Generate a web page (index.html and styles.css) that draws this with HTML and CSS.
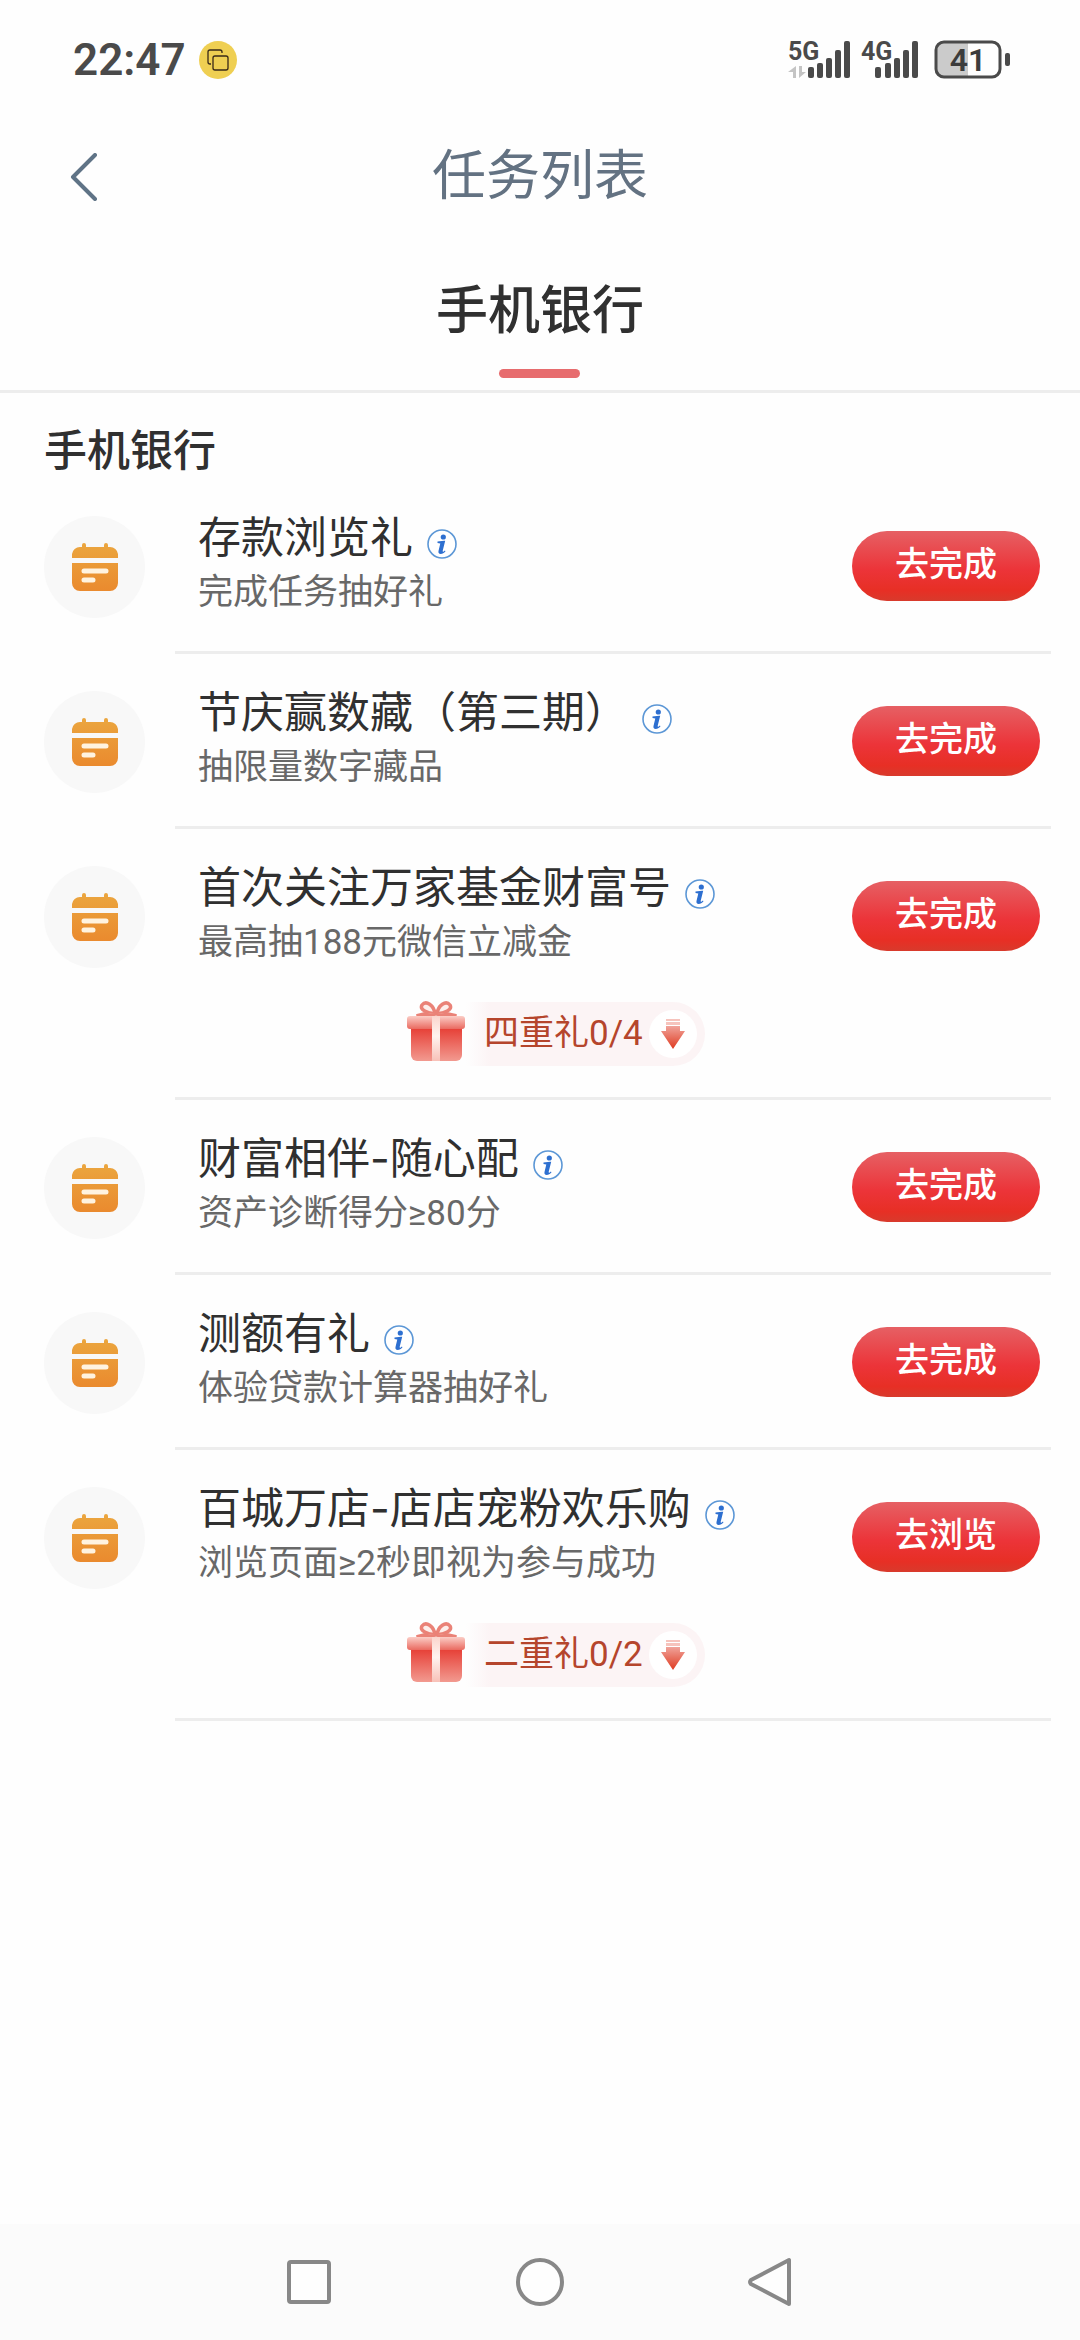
FILE: index.html
```html
<!DOCTYPE html>
<html lang="zh-CN">
<head>
<meta charset="utf-8">
<meta name="viewport" content="width=device-width, initial-scale=1">
<title>任务列表</title>
<link rel="stylesheet" href="styles.css">
</head>
<body>
<svg class="defs" aria-hidden="true">
  <defs>
    <linearGradient id="orange" x1="0" y1="0" x2="0" y2="1"><stop offset="0" stop-color="#eba63f"/><stop offset="1" stop-color="#ea8a2e"/></linearGradient>
    <linearGradient id="box" x1="0" y1="0" x2="0" y2="1"><stop offset="0" stop-color="#e63c33"/><stop offset="1" stop-color="#f29a90"/></linearGradient>
    <linearGradient id="lid" x1="0" y1="0" x2="0" y2="1"><stop offset="0" stop-color="#fbcdc6"/><stop offset="1" stop-color="#ea6a60"/></linearGradient>
    <linearGradient id="ribbon" x1="0" y1="0" x2="0" y2="1"><stop offset="0" stop-color="#fbd5cd"/><stop offset="0.45" stop-color="#fff3ef"/><stop offset="1" stop-color="#f8c1b8"/></linearGradient>
    <linearGradient id="down" x1="0" y1="0" x2="0" y2="1"><stop offset="0" stop-color="#f0a39a"/><stop offset="1" stop-color="#df3a20"/></linearGradient>
    <symbol id="task" viewBox="0 0 46 48">
      <path fill="url(#orange)" d="M8 4h2V2a2 2 0 0 1 4 0v2h18V2a2 2 0 0 1 4 0v2h2a8 8 0 0 1 8 7v4H0v-4a8 8 0 0 1 8-7zM0 20h46v20a8 8 0 0 1-8 8H8a8 8 0 0 1-8-8z"/>
      <path fill="none" stroke="#fff3e0" stroke-width="5" stroke-linecap="round" d="M12 28h22M12 37h9"/>
    </symbol>
    <symbol id="info" viewBox="0 0 30 30">
      <circle cx="15" cy="15" r="14" fill="#fff" stroke="#5c97d6" stroke-width="1.600"/>
      <circle cx="16.300" cy="8" r="2.600" fill="#2d6fd0"/>
      <path fill="#2d6fd0" d="M10.500 12.600l6.500-.8h1.200l-2.500 10c-.2 1 .3 1.300 1 .8l1.200-1 .6.6c-1.500 1.800-3 2.800-4.800 2.800-1.900 0-2.600-1.200-2.200-2.900l1.800-7.600-2.800-.6z"/>
    </symbol>
    <symbol id="gift" viewBox="0 0 60 62">
      <g fill="#fdeeeb" stroke="#ea8277" stroke-linejoin="round">
        <path stroke-width="3.500" d="M29 13C22 12 13 9 16 4c4-5 12 0 13 9zM31 13c7-1 16-4 13-9-4-5-12 0-13 9z"/>
        <path stroke-width="2" fill="#f6b9b1" d="M29 12c-7-1-12 0-18 2h17zM31 12c7-1 12 0 19 2H32z"/>
      </g>
      <path fill="url(#box)" d="M5 26h51v28a6 6 0 0 1-6 6H11a6 6 0 0 1-6-6z"/>
      <rect x="1" y="15" width="58" height="13" rx="3" fill="url(#lid)"/>
      <rect x="26" y="15" width="8" height="45" fill="url(#ribbon)"/>
    </symbol>
    <symbol id="arrow" viewBox="0 0 48 48">
      <circle cx="24" cy="24" r="24" fill="#fff"/>
      <path fill="#f6c3bc" d="M17 9h14v2H17zM17 12h14v3H17z"/>
      <path fill="url(#down)" d="M17 16h14v5h5L24 39 12 21h5z"/>
    </symbol>
  </defs>
</svg>

<div class="screen">
  <div class="status">
    <div class="status-left">
      <span class="clock">22:47</span>
      <svg class="badge" viewBox="0 0 38 38"><circle cx="19" cy="19" r="19" fill="#efcf52"/><g fill="none" stroke="#3a2a18" stroke-width="1.300"><rect x="14" y="15" width="15" height="14" rx="2"/><path d="M12 23h-1a2 2 0 0 1-2-2V11a2 2 0 0 1 2-2h10a2 2 0 0 1 2 2v1"/></g></svg>
    </div>
    <div class="status-right">
      <div class="signal">
        <span class="net">5G</span>
        <svg viewBox="0 0 64 40" fill="#4a4a4a">
          <path fill="#c4c4c4" d="M8 26v12H5v-6H0zM11 26h3v6h4l-7 6z"/>
          <rect x="20" y="27" width="6" height="11" rx="2"/><rect x="29" y="23" width="6" height="15" rx="2"/><rect x="38" y="18" width="6" height="20" rx="2"/><rect x="47" y="10" width="6" height="28" rx="2"/><rect x="56" y="1" width="6" height="37" rx="2"/>
        </svg>
      </div>
      <div class="signal">
        <span class="net">4G</span>
        <svg viewBox="0 0 64 40" fill="#4a4a4a">
          <rect x="14" y="27" width="6" height="11" rx="2"/><rect x="24" y="23" width="6" height="15" rx="2"/><rect x="33" y="18" width="6" height="20" rx="2"/><rect x="42" y="10" width="6" height="28" rx="2"/><rect x="51" y="1" width="6" height="37" rx="2"/>
        </svg>
      </div>
      <svg class="battery" viewBox="0 0 76 40">
        <path fill="#cbcbcb" d="M10 3h24v34H10a7 7 0 0 1-7-7V10a7 7 0 0 1 7-7z"/>
        <rect x="2" y="2" width="64" height="35" rx="8" fill="none" stroke="#4a4a4a" stroke-width="3"/>
        <rect x="71" y="13" width="5" height="13" rx="2" fill="#4a4a4a"/>
        <text x="34" y="31" class="level" text-anchor="middle">41</text>
      </svg>
    </div>
  </div>

  <header class="bar">
    <button class="back" type="button" aria-label="返回"><svg viewBox="0 0 28 48"><path d="M25 2L3 24l22 22" fill="none" stroke="#5f7386" stroke-width="4" stroke-linecap="round" stroke-linejoin="round"/></svg></button>
    <h1 class="bar-title">任务列表</h1>
  </header>

  <nav class="tabs"><button class="tab" type="button">手机银行</button></nav>

  <main class="content">
    <h2 class="section-title">手机银行</h2>
    <ul class="list">
      <li class="item">
        <span class="avatar"><svg><use href="#task"/></svg></span>
        <div class="body">
          <div class="main">
            <div class="texts"><h3 class="name">存款浏览礼<svg class="info"><use href="#info"/></svg></h3><p class="desc">完成任务抽好礼</p></div>
            <button class="go" type="button">去完成</button>
          </div>
        </div>
      </li>
      <li class="item">
        <span class="avatar"><svg><use href="#task"/></svg></span>
        <div class="body">
          <div class="main">
            <div class="texts"><h3 class="name">节庆赢数藏（第三期）<svg class="info"><use href="#info"/></svg></h3><p class="desc">抽限量数字藏品</p></div>
            <button class="go" type="button">去完成</button>
          </div>
        </div>
      </li>
      <li class="item">
        <span class="avatar"><svg><use href="#task"/></svg></span>
        <div class="body">
          <div class="main">
            <div class="texts"><h3 class="name">首次关注万家基金财富号<svg class="info"><use href="#info"/></svg></h3><p class="desc">最高抽188元微信立减金</p></div>
            <button class="go" type="button">去完成</button>
          </div>
          <button class="reward" type="button"><svg class="gift"><use href="#gift"/></svg><span class="pill">四重礼0/4<svg class="arrow"><use href="#arrow"/></svg></span></button>
        </div>
      </li>
      <li class="item">
        <span class="avatar"><svg><use href="#task"/></svg></span>
        <div class="body">
          <div class="main">
            <div class="texts"><h3 class="name">财富相伴-随心配<svg class="info"><use href="#info"/></svg></h3><p class="desc">资产诊断得分≥80分</p></div>
            <button class="go" type="button">去完成</button>
          </div>
        </div>
      </li>
      <li class="item">
        <span class="avatar"><svg><use href="#task"/></svg></span>
        <div class="body">
          <div class="main">
            <div class="texts"><h3 class="name">测额有礼<svg class="info"><use href="#info"/></svg></h3><p class="desc">体验贷款计算器抽好礼</p></div>
            <button class="go" type="button">去完成</button>
          </div>
        </div>
      </li>
      <li class="item">
        <span class="avatar"><svg><use href="#task"/></svg></span>
        <div class="body">
          <div class="main">
            <div class="texts"><h3 class="name">百城万店-店店宠粉欢乐购<svg class="info"><use href="#info"/></svg></h3><p class="desc">浏览页面≥2秒即视为参与成功</p></div>
            <button class="go" type="button">去浏览</button>
          </div>
          <button class="reward" type="button"><svg class="gift"><use href="#gift"/></svg><span class="pill">二重礼0/2<svg class="arrow"><use href="#arrow"/></svg></span></button>
        </div>
      </li>
    </ul>
  </main>

  <nav class="sysnav">
    <button type="button" aria-label="最近任务"><svg viewBox="0 0 50 50"><rect x="5" y="5" width="40" height="40" rx="2"/></svg></button>
    <button type="button" aria-label="主页"><svg viewBox="0 0 50 50"><circle cx="25" cy="25" r="22"/></svg></button>
    <button type="button" aria-label="返回上一页"><svg viewBox="0 0 50 50"><path d="M43 3v44L5 27q-2-2 0-4z"/></svg></button>
  </nav>
</div>
</body>
</html>
```

FILE: styles.css
```css
* { box-sizing: border-box; }

body {
  margin: 0;
  background: #fefefe;
  color: #303030;
  font-family: Roboto, "Noto Sans CJK SC", sans-serif;
}

h1, h2, h3, p, ul { margin: 0; padding: 0; font-weight: 400; }
ul { list-style: none; }
svg { display: block; flex: none; }
button { margin: 0; padding: 0; border: 0; background: none; color: inherit; font: inherit; }

.defs { position: absolute; width: 0; height: 0; }

.screen { display: flex; flex-direction: column; min-height: 100vh; }

/* status bar */
.status {
  display: flex;
  justify-content: space-between;
  align-items: center;
  height: 120px;
  padding: 0 70px 0 73px;
}
.status-left, .status-right { display: flex; align-items: center; }
.status-left { gap: 13px; }
.status-right { gap: 9px; }
.clock { font-size: 44px; font-weight: 600; line-height: 52px; color: #4a4a4a; }
.badge { width: 38px; height: 38px; }
.signal { display: grid; width: 64px; height: 40px; }
.signal > * { grid-area: 1 / 1; }
.signal svg { width: 64px; height: 40px; }
.net { font-size: 25px; font-weight: 700; line-height: 24px; color: #4a4a4a; }
.battery { width: 76px; height: 40px; }
.level { font-size: 32px; font-weight: 600; fill: #3c3c3c; }

/* title bar */
.bar {
  display: grid;
  grid-template-columns: 1fr auto 1fr;
  align-items: center;
  height: 114px;
  padding: 0 70px;
}
.back { justify-self: start; }
.back svg { width: 28px; height: 48px; }
.bar-title { font-size: 54px; line-height: 64px; color: #637282; }

/* tabs */
.tabs {
  display: flex;
  justify-content: center;
  height: 159px;
  padding-top: 46px;
  border-bottom: 3px solid #ededed;
}
.tab {
  display: flex;
  flex-direction: column;
  align-items: center;
  gap: 25px;
  height: 98px;
  font-size: 52px;
  font-weight: 500;
  line-height: 64px;
}
.tab::after { content: ""; width: 81px; height: 9px; border-radius: 5px; background: #e76c6e; }

/* task list */
.content { flex: 1; }
.section-title {
  padding: 30px 44px 0;
  font-size: 43px;
  font-weight: 500;
  line-height: 56px;
}
.item { display: flex; gap: 30px; padding: 0 29px 0 44px; }
.avatar {
  display: flex;
  flex: none;
  justify-content: center;
  align-items: center;
  width: 101px;
  height: 102px;
  margin-top: 37px;
  border-radius: 50%;
  background: #f8f8f8;
}
.avatar svg { width: 46px; height: 48px; }
.body { flex: 1; border-bottom: 3px solid #ededed; }
.main {
  display: flex;
  justify-content: space-between;
  align-items: center;
  padding: 31px 11px 29px 23px;
}
.name {
  display: flex;
  align-items: center;
  gap: 14px;
  font-family: Inter, "Noto Sans CJK SC", sans-serif;
  font-size: 43px;
  line-height: 54px;
}
.info { width: 30px; height: 30px; margin-top: 14px; }
.desc { font-size: 35px; line-height: 58px; color: #686868; }
.go {
  width: 188px;
  height: 70px;
  border-radius: 35px;
  background: linear-gradient(#e66064, #ec3439 55%, #e72f25 85%, #d83a2c);
  color: #fff;
  font-size: 34px;
  font-weight: 500;
  line-height: 66px;
  padding-bottom: 4px;
}

.reward { display: flex; align-items: center; margin: 0 auto 30px 231px; height: 66px; }
.gift { width: 60px; height: 62px; margin-bottom: 4px; }
.pill {
  display: flex;
  align-items: center;
  gap: 6px;
  height: 64px;
  padding: 0 8px 0 18px;
  border-radius: 0 32px 32px 0;
  background: linear-gradient(90deg, #fefefe, #fcf4f5 24px);
  color: #b5452c;
  font-size: 35px;
  line-height: 60px;
}
.arrow { width: 48px; height: 48px; }

/* system navigation */
.sysnav {
  display: flex;
  justify-content: center;
  align-items: center;
  gap: 181px;
  height: 116px;
  background: #fbfbfb;
}
.sysnav svg {
  width: 50px;
  height: 50px;
  fill: #fefefe;
  stroke: #888;
  stroke-width: 4;
  stroke-linejoin: round;
}
```
